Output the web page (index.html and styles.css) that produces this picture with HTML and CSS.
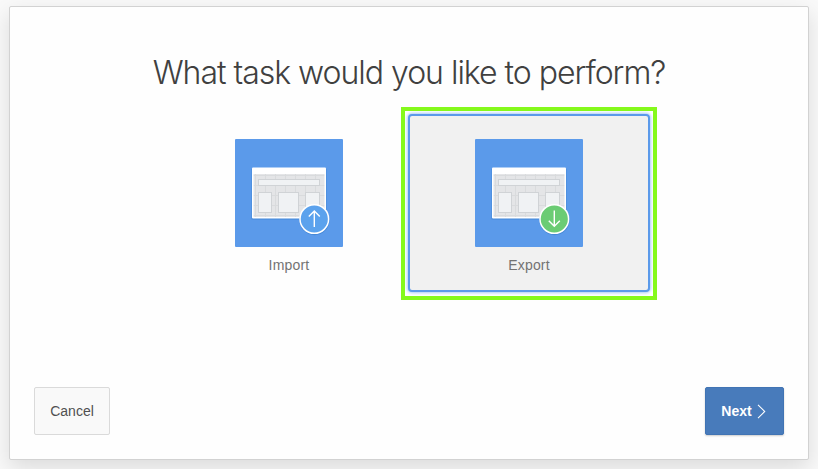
FILE: index.html
```
<!DOCTYPE html>
<html lang="en">
<head>
<meta charset="utf-8">
<title>Select task</title>
<link rel="stylesheet" href="styles.css">
</head>
<body>
<svg class="defs" width="0" height="0" aria-hidden="true">
  <defs>
    <pattern id="grid" width="10" height="10" patternUnits="userSpaceOnUse" x="20" y="36">
      <rect width="10" height="10" fill="#e4e5e7"/>
      <path d="M0 .5H10M.5 0V10" stroke="#d9dbdd"/>
    </pattern>
    <g id="page">
      <rect x="16.5" y="29" width="75" height="51.5" rx="1" fill="#4588d8"/>
      <rect x="17" y="28.5" width="74" height="51" rx="1" fill="#fff"/>
      <rect x="18.5" y="35" width="71" height="43" fill="url(#grid)"/>
      <g fill="#f0f2f4" stroke="#d0d3d6">
        <rect x="23.5" y="40.500" width="61" height="6"/>
        <rect x="23.500" y="53.500" width="13" height="20"/>
        <rect x="43.500" y="53.500" width="20" height="20"/>
        <rect x="70.500" y="53.500" width="14" height="20"/>
      </g>
    </g>
  </defs>
</svg>
<main class="wizard">
  <h1>What task would you like to perform?</h1>
  <div class="options">
    <div class="option">
      <svg class="picture" viewBox="0 0 108 108">
        <rect width="108" height="108" rx="1" fill="#5b9aea"/>
        <use href="#page"/>
        <circle cx="79.500" cy="81.200" r="15" fill="#4588d8"/>
        <circle cx="79.300" cy="80" r="14.300" fill="#5ba2ed" stroke="#fff" stroke-width="1.500"/>
        <path d="M79.300 88V72M73.800 77.500 79.300 72l5.500 5.500" fill="none" stroke="#fff" stroke-width="1.400"/>
      </svg>
      <span>Import</span>
    </div>
    <div class="option selected">
      <svg class="picture" viewBox="0 0 108 108">
        <rect width="108" height="108" rx="1" fill="#5b9aea"/>
        <use href="#page"/>
        <circle cx="79.500" cy="81.200" r="15" fill="#4588d8"/>
        <circle cx="79.300" cy="80" r="14.300" fill="#6bcc74" stroke="#fff" stroke-width="1.500"/>
        <path d="M79.300 71.500V87.300M73.800 81.800l5.500 5.500 5.500-5.500" fill="none" stroke="#fff" stroke-width="1.400"/>
      </svg>
      <span>Export</span>
    </div>
  </div>
  <footer>
    <button class="cancel">Cancel</button>
    <button class="next">Next<svg width="9" height="15" viewBox="0 0 9 15"><path d="M1 .8 7.700 7.500 1 14.200" fill="none" stroke="#fff" stroke-width="1.100"/></svg></button>
  </footer>
</main>
</body>
</html>
```
FILE: styles.css
```
* { box-sizing: border-box; }

body {
  margin: 0;
  height: 469px;
  overflow: hidden;
  padding: 6px 9px 9px;
  background: #f9f9f9;
  font-family: "Liberation Sans", Arial, sans-serif;
}

.defs { display: block; }

.wizard {
  display: flex;
  flex-direction: column;
  width: 800px;
  height: 454px;
  padding: 0 24px 24px;
  border: 1px solid #d2d2d2;
  border-radius: 2px;
  background: #fefefe;
  box-shadow: 0 8px 22px rgba(0, 0, 0, .12);
}

h1 {
  margin: 44px 0 0;
  color: #404040;
  font: 300 32px/44px Inter, "Liberation Sans", sans-serif;
  letter-spacing: -1.02px;
  text-align: center;
  white-space: nowrap;
}

.options {
  display: flex;
  justify-content: center;
  margin-top: 19px;
}

.option {
  position: relative;
  display: flex;
  flex-direction: column;
  align-items: center;
  width: 242px;
  height: 178px;
  padding-top: 23px;
  border: 2px solid transparent;
  border-radius: 4px;
  color: #737373;
  font-size: 14px;
}

.option + .option { margin-left: -2px; }

.picture { width: 108px; height: 108px; }

.option span { margin-top: 10px; line-height: 16px; letter-spacing: .2px; }

.selected {
  border-color: #5b9aea;
  background: #f1f1f1;
  box-shadow: 0 0 3px 1px #a9cdf8;
}

.selected::after {
  content: "";
  position: absolute;
  inset: -9px -9px -10px -9px;
  border: 4px solid #85f91c;
}

footer {
  display: flex;
  justify-content: space-between;
  margin-top: auto;
}

button {
  height: 48px;
  padding: 0;
  border-radius: 2px;
  font: 14px "Liberation Sans", Arial, sans-serif;
}

.cancel {
  width: 76px;
  border: 1px solid #dadada;
  background: #f9f9f9;
  color: #505050;
}

.next {
  display: flex;
  align-items: center;
  justify-content: center;
  gap: 5px;
  width: 79px;
  padding-right: 2px;
  border: 1px solid #4174b4;
  background: #487bbb;
  color: #fff;
  font-weight: 700;
  box-shadow: 0 1px 2px rgba(0, 0, 0, .2);
}
```
